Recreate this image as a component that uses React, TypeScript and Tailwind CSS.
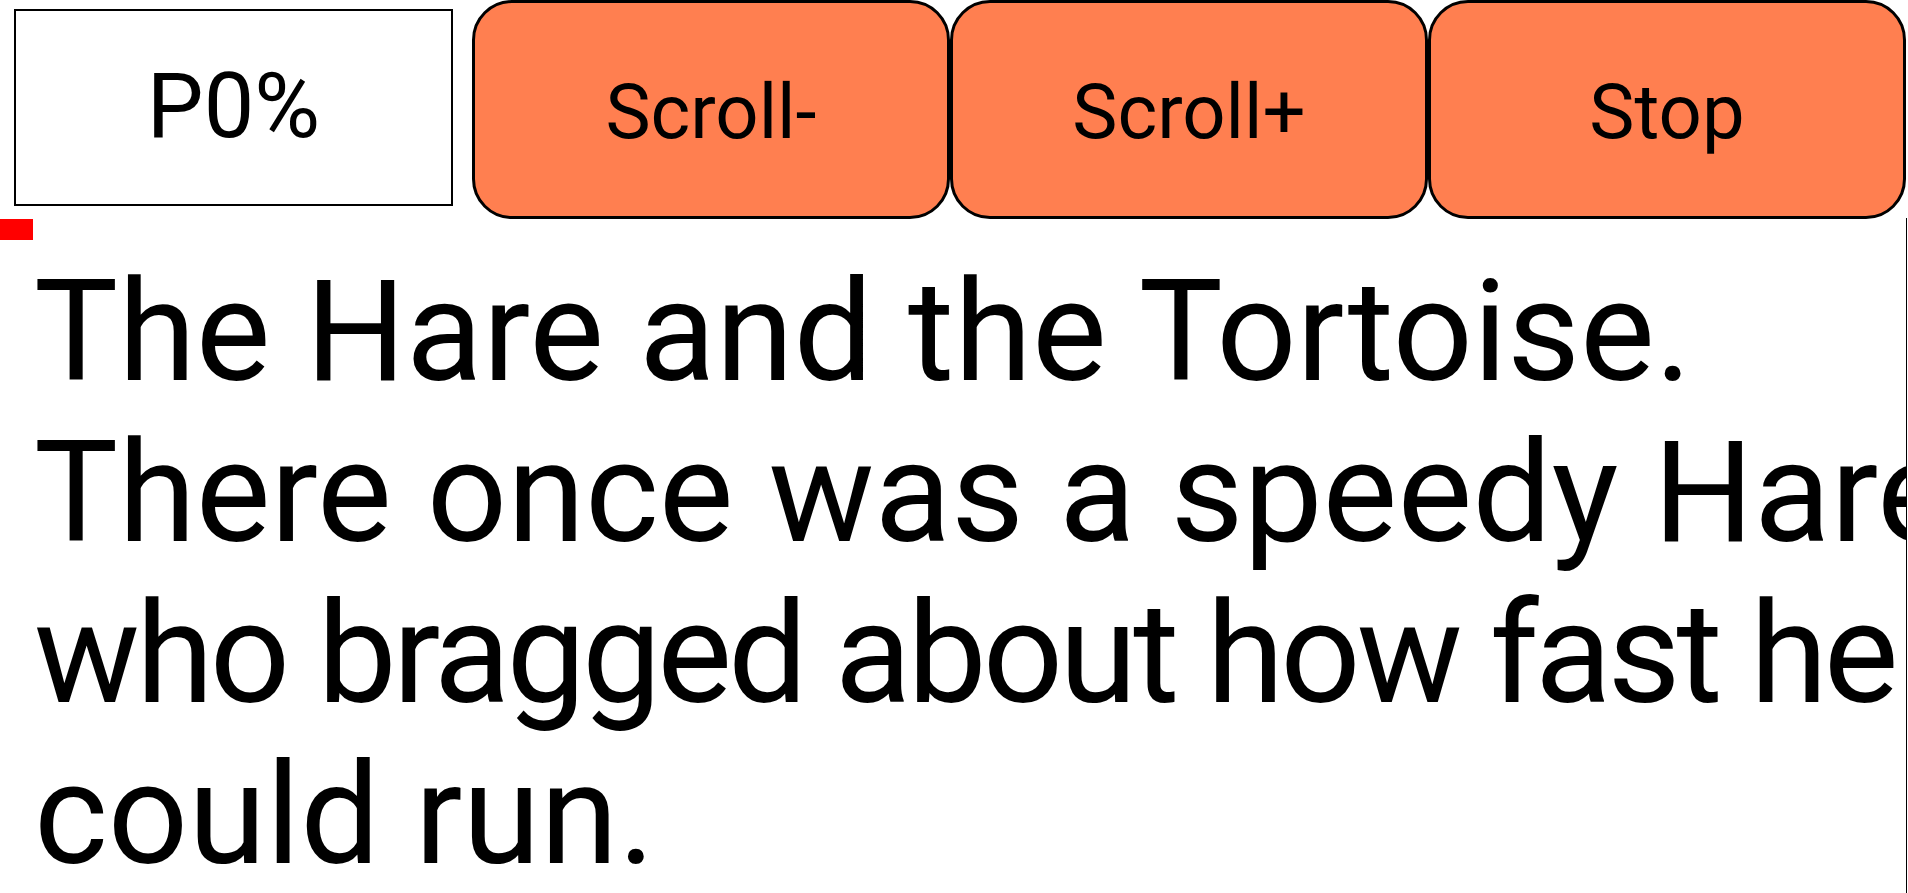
import React from 'react'

const buttons = ['Scroll-', 'Scroll+', 'Stop']

export default function App() {
  return (
    <div className="w-[1908px] h-[893px] overflow-hidden bg-white font-['Roboto',sans-serif] text-black">
      <div className="flex h-[218px]">
        <div className="ml-[14px] mt-[9px] w-[439px] h-[197px] border-2 border-black flex items-center justify-center text-[90px] leading-none pb-[2px]">
          P0%
        </div>
        <div className="ml-[19px] flex">
          {buttons.map((b) => (
            <button
              key={b}
              className="w-[478px] h-[219px] bg-[#ff7f50] border-[3px] border-black rounded-[40px] flex items-center justify-center text-[76px] leading-none pt-[4px]"
            >
              {b}
            </button>
          ))}
        </div>
      </div>
      <div className="w-[1907px] h-[675px] border-r border-black overflow-hidden">
        <div className="mt-[1px] w-[33px] h-[21px] bg-[#ff0000]" />
        <div className="mt-[11px] pl-[34px] whitespace-nowrap text-[141px] leading-[161px]">
          <div>The Hare and the Tortoise.</div>
          <div>There once was a speedy Hare</div>
          <div className="tracking-[-3.9px]">who bragged about how fast he</div>
          <div>could run.</div>
        </div>
      </div>
    </div>
  )
}
